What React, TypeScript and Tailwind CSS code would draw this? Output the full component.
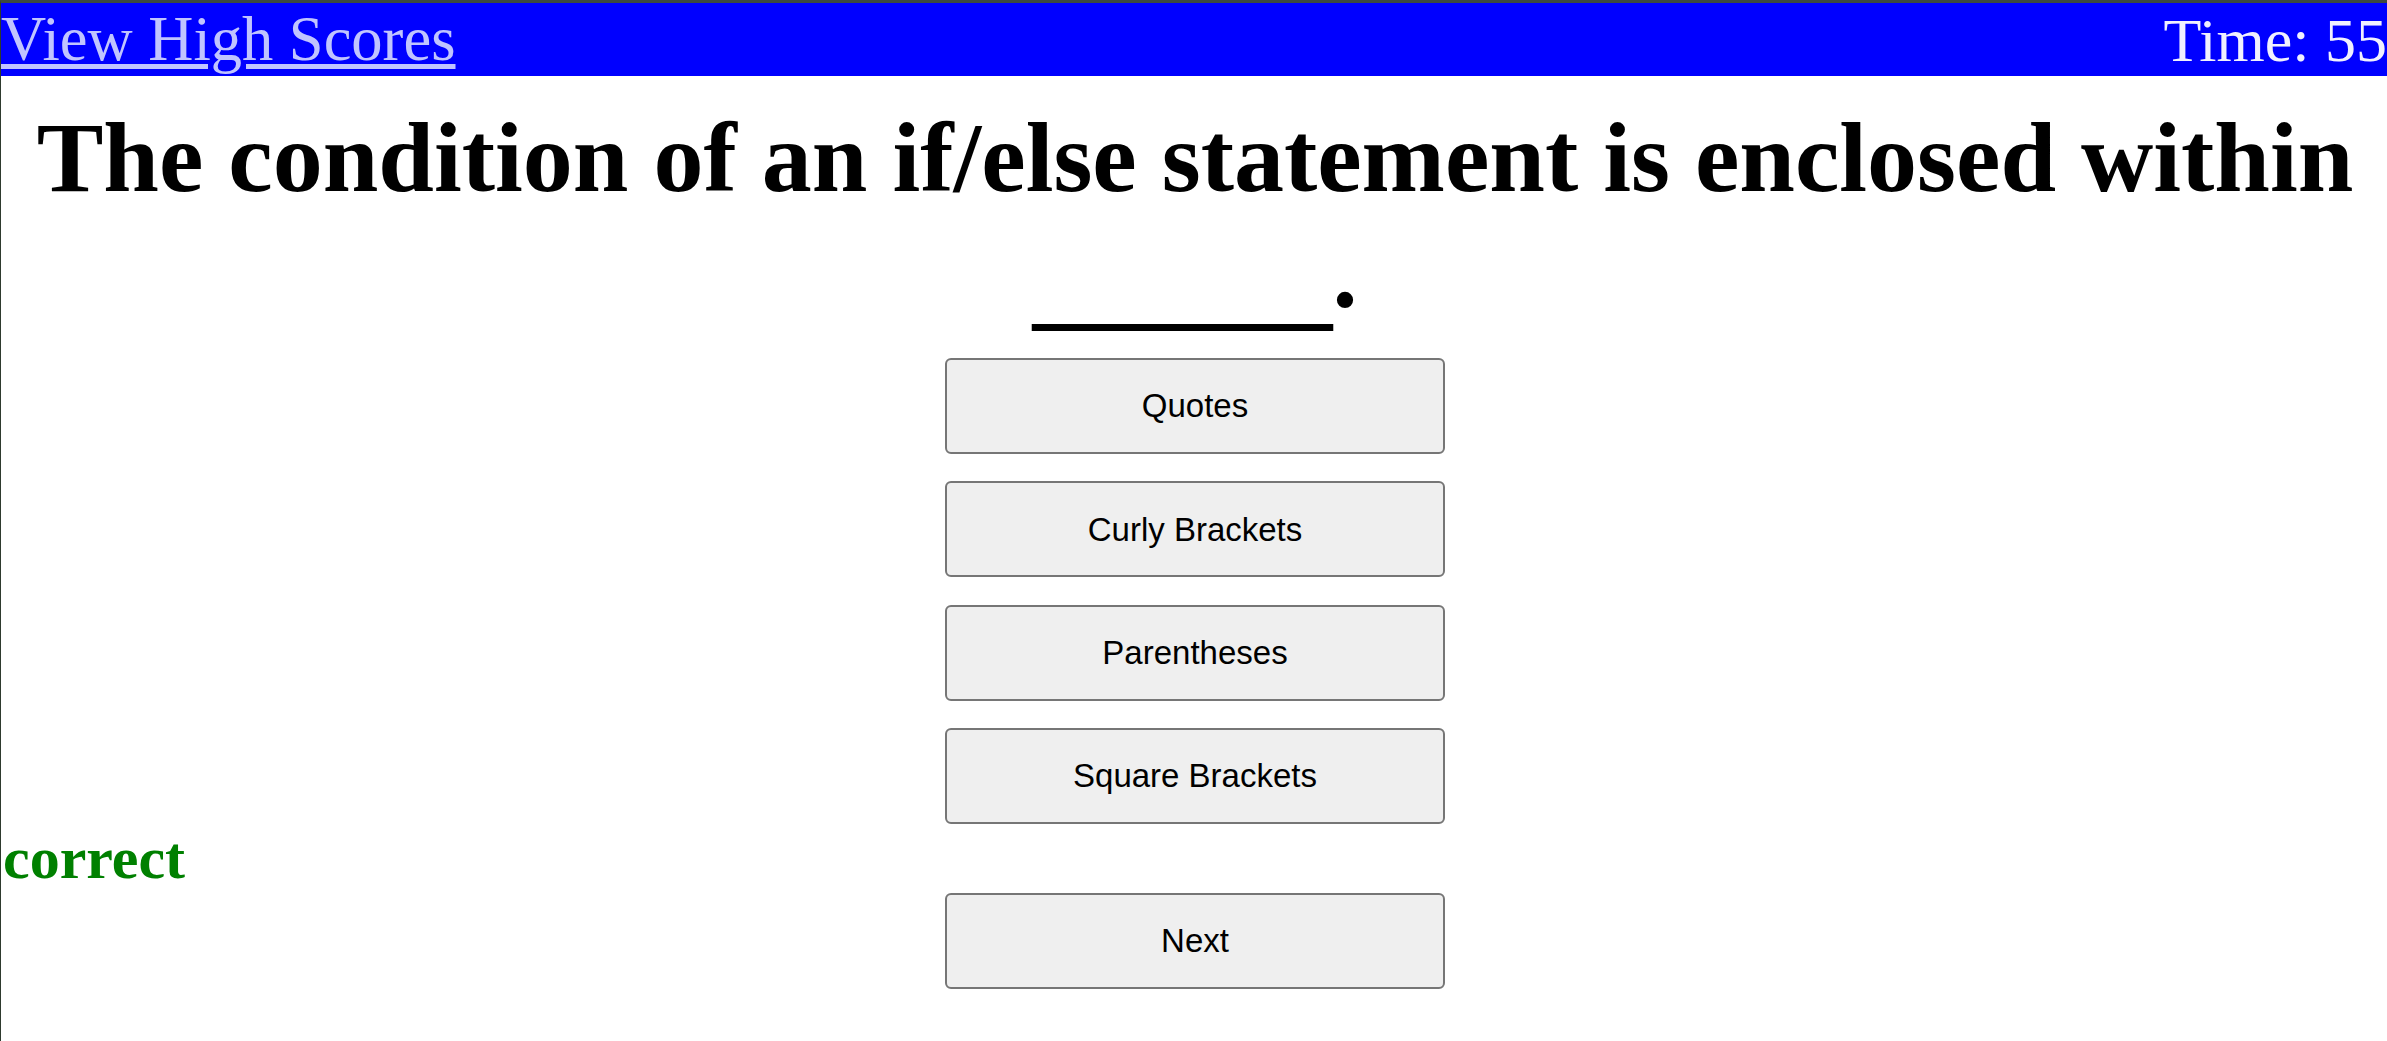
const choices = ['Quotes', 'Curly Brackets', 'Parentheses', 'Square Brackets'];

function ChoiceButton({ label }: { label: string }) {
  return (
    <button className="w-[500px] h-[96px] rounded-[6px] border-2 border-[#767676] bg-[#efefef] text-[33px] text-black font-['Liberation_Sans',Arial,sans-serif]">
      {label}
    </button>
  );
}

export default function App() {
  return (
    <div className="min-h-[1041px] bg-white border-t-[3px] border-t-[#3d4a3d] border-l border-l-[#2e3a2e] font-['Liberation_Serif','Times_New_Roman',serif]">
      <header className="flex justify-between items-center h-[73px] bg-[#0000ff] leading-none">
        <a href="#" className="text-[62.5px] text-[#c0c4ff] underline decoration-[5px] underline-offset-[4px]">
          View High Scores
        </a>
        <span className="text-[62px] text-[#f0f0ff]">Time: 55</span>
      </header>
      <main className="flex flex-col items-center pl-[2px]">
        <h1 className="mt-[24px] text-center text-[100px] font-bold leading-[116px] text-black">
          The condition of an if/else statement is enclosed within{' '}
          <span className="leading-[0.9] align-[-10px]">______</span>.
        </h1>
        <div className="flex flex-col items-center gap-[27.3px] mt-[26px]">
          {choices.map((c) => (
            <ChoiceButton key={c} label={c} />
          ))}
        </div>
        <div className="self-start text-[60px] font-bold text-[#008000] leading-[1.15]">correct</div>
        <ChoiceButton label="Next" />
      </main>
    </div>
  );
}
